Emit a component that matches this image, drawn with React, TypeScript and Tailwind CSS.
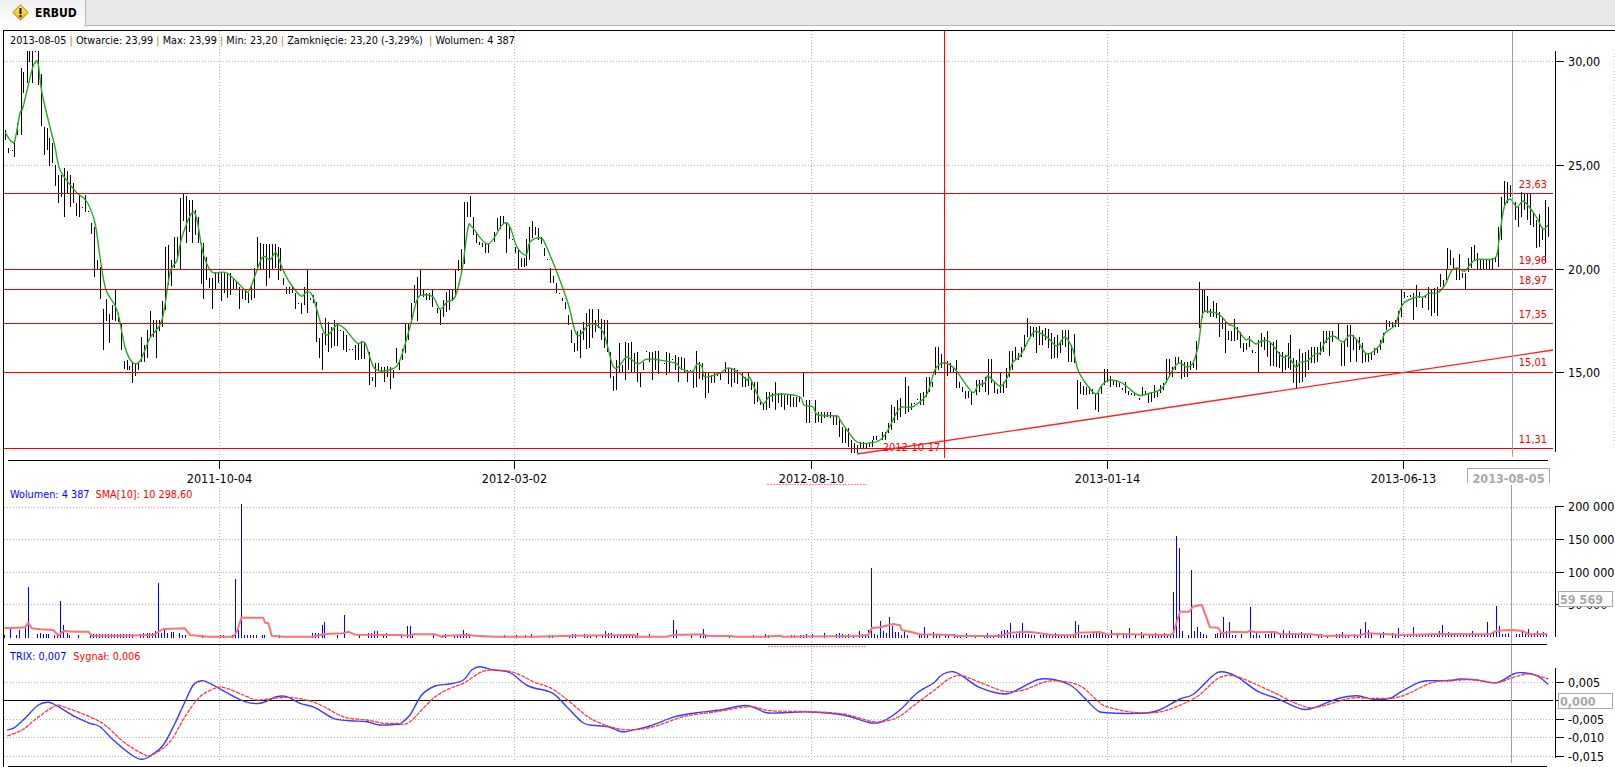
import React from "react";

type R = number[][];
const snap = (ox: number, oy: number, rows: R, from = -1e9, to = 1e9) =>
  rows
    .filter((r) => r[0] >= from && r[0] <= to)
    .map(([X, t, b]) => {
      const x = Math.round(ox + X / 3) + 0.5;
      const y1 = Math.max(51, Math.round(oy + t / 3));
      const y2 = Math.max(y1 + 1, Math.round(oy + b / 3));
      return `M${x} ${y1}V${y2}`;
    })
    .join("");

const smooth = (s: string) => {
  const raw = s.trim().split(/\s+/).map((p) => p.split(",").map(Number));
  const a: number[][] = [];
  for (const p of raw) if (!a.length || p[0] > a[a.length - 1][0]) a.push(p);
  let d = `M${a[0][0]} ${a[0][1]}`;
  for (let i = 0; i < a.length - 1; i++) {
    const p0 = a[Math.max(0, i - 1)], p1 = a[i], p2 = a[i + 1], p3 = a[Math.min(a.length - 1, i + 2)];
    const c1x = p1[0] + (p2[0] - p0[0]) / 6, c1y = p1[1] + (p2[1] - p0[1]) / 6;
    const c2x = p2[0] - (p3[0] - p1[0]) / 6, c2y = p2[1] - (p3[1] - p1[1]) / 6;
    d += `C${c1x.toFixed(1)} ${c1y.toFixed(1)} ${c2x.toFixed(1)} ${c2y.toFixed(1)} ${p2[0]} ${p2[1]}`;
  }
  return d;
};

const c1: R = [[15,390,420],[25,445,458],[35,450,453],[43,425,472],[52,370,405],[62,205,405],[70,215,280],[80,153,250],[88,153,185],[97,153,248],[106,153,156],[115,153,255],[124,222,378],[133,382,465],[142,385,450],[148,415,497],[156,430,490],[165,495,558]];
const c7: R = [[175,15,98],[184,15,80],[193,-6,140],[202,3,70],[211,15,110],[220,40,98],[229,100,138],[238,75,140],[247,110,113],[256,75,125],[265,122,125],[274,158,193],[283,170,320],[292,270,300],[301,290,388],[310,418,540],[319,388,452],[328,433,518],[337,405,450],[346,360,452],[355,428,455],[364,460,540],[373,573,598],[380,571,600],[388,587,600],[397,575,638],[406,580,617],[415,575,600],[424,500,575],[433,525,575],[442,480,565],[451,424,505],[460,450,500],[469,450,563],[478,450,482],[487,393,470],[496,232,420],[505,225,345],[514,270,348],[523,200,295],[532,200,270],[541,85,297],[550,72,152],[559,78,218],[568,90,185],[577,90,218],[586,120,195],[595,140,218],[604,218,342],[610,218,388],[619,262,330],[628,325,355],[637,325,418],[646,305,357],[655,305,340],[664,310,392],[673,310,368],[682,310,383],[691,310,375],[700,325,357],[709,335,360],[718,352,418],[727,360,388],[736,360,390],[745,368,398],[754,342,390],[763,295,385],[772,200,295],[781,220,298],[790,222,298],[799,222,347],[808,222,325],[817,222,300],[826,222,295],[835,230,330],[841,235,302],[850,325,345],[859,352,372],[868,350,372],[877,350,368],[886,370,418],[895,398,402],[904,398,433],[913,352,405],[922,298,428],[931,385,390],[940,375,400],[949,395,515],[958,505,565],[967,490,600],[976,445,525],[985,455,545],[994,470,533],[1003,450,527],[1012,460,527],[1021,480,483],[1030,482,540],[1039,495,545],[1048,538,541],[1057,538,541],[1066,525,570],[1075,520,570],[1084,513,568],[1093,515,568],[1108,545,645],[1117,620,632],[1126,580,650],[1135,580,600],[1144,590,608],[1153,590,635],[1162,587,620],[1171,590,658],[1180,600,625],[1189,535,580],[1198,570,600]];
const c8: R = [[7,508,540],[16,428,520],[25,428,480],[34,370,430],[43,315,370],[52,290,422],[61,270,345],[70,330,350],[79,340,360],[88,340,360],[97,330,380],[112,385,398],[121,390,435],[130,360,412],[139,335,395],[148,330,390],[157,330,362],[166,270,350],[175,240,273],[184,207,270],[193,67,253],[202,65,110],[211,48,110],[220,110,165],[229,155,188],[238,185,195],[247,190,200],[256,190,218],[265,190,218],[283,155,185],[292,115,150],[301,108,148],[310,108,130],[319,130,218],[328,140,178],[337,178,181],[346,200,218],[355,210,268],[364,235,260],[373,235,260],[379,178,258],[388,140,240],[397,123,175],[406,140,165],[415,143,180],[424,172,193],[433,203,228],[442,237,240],[451,265,308],[460,287,310],[469,308,338],[478,338,342],[487,355,362],[496,365,387],[505,405,435],[514,450,490],[523,490,515],[532,452,513],[541,450,533],[550,425,480],[559,400,508],[568,388,505],[577,388,475],[586,420,455],[595,388,445],[604,417,480],[613,420,505],[622,420,515],[629,515,595],[638,588,632],[647,540,630],[656,490,575],[665,555,575],[674,487,600],[683,490,570],[692,487,575],[701,520,575],[710,515,605],[719,575,622],[728,545,570],[737,513,516],[746,515,545],[755,515,600],[764,513,570],[773,513,582],[782,540,543],[791,548,551],[798,517,585],[807,520,580],[816,538,541],[825,525,570],[834,530,607],[843,530,570],[852,535,575],[861,570,607],[870,570,573],[879,570,625],[888,513,622],[897,545,598],[906,548,600],[915,575,655],[924,575,640],[933,585,608],[942,575,608],[951,575,588],[960,575,600],[975,545,580],[984,565,612],[993,565,622],[1002,565,608],[1011,570,612],[1026,580,620],[1035,590,620],[1044,580,618],[1053,600,630],[1062,605,672],[1071,605,665],[1080,665,675],[1090,670,690],[1099,635,690],[1108,635,685],[1117,640,665],[1126,605,690],[1135,640,670],[1144,640,680],[1153,645,690],[1162,645,675],[1171,645,680],[1180,650,680],[1189,650,680],[1198,650,665]];
const c6: R = [[458,100,172],[467,180,250],[476,180,250],[494,180,248],[503,215,245],[512,215,248],[521,215,235],[530,215,230],[539,215,235],[548,225,255],[557,225,255],[566,235,290],[575,260,310],[584,262,310],[593,265,320],[602,300,340],[611,308,340],[620,315,340],[629,305,325],[638,305,325],[647,310,325],[656,310,322],[665,300,322]];
const c9: R = [[220,497,510],[229,497,510],[247,485,510],[256,485,510],[265,460,490],[274,405,480],[283,410,460],[292,390,450],[301,385,440],[316,320,432],[325,348,425],[334,400,420],[343,400,403],[352,388,391],[361,370,405],[370,367,405],[379,320,380],[388,322,365],[397,335,350],[406,232,315],[415,232,300],[424,252,295],[442,273,318],[451,278,310],[460,292,310],[469,270,353],[478,335,355],[487,350,365],[496,362,387],[505,362,385],[514,365,405],[529,330,375],[538,330,365],[547,330,350],[556,320,365],[565,268,375],[574,268,340],[583,335,370],[592,358,372],[601,305,370],[610,335,368],[619,295,355],[628,243,320],[637,243,300],[646,232,270],[655,250,270],[664,232,260],[673,195,240],[682,143,200],[691,168,198],[700,170,200],[709,170,248],[718,168,225],[727,180,225],[736,175,210],[745,178,235],[754,190,268],[763,200,265],[772,195,265],[781,215,250],[787,180,225],[796,180,232],[805,180,275],[814,225,275],[823,192,280],[832,330,417],[841,335,372],[850,348,375],[859,352,375],[868,352,372],[877,358,372],[886,370,420],[895,370,425],[904,345,372],[913,298,345],[922,298,335],[931,318,350],[940,330,345],[949,330,350],[958,340,350],[967,355,360],[976,335,370],[985,363,375],[994,368,375],[1003,370,378],[1018,385,390],[1027,352,375],[1036,362,372],[1045,370,398],[1054,365,395],[1063,345,385],[1072,362,380],[1081,345,370],[1090,340,360],[1099,267,340],[1108,267,320],[1117,290,320],[1126,262,300],[1135,262,280],[1144,270,328],[1153,275,320],[1162,275,320],[1171,272,300],[1180,278,295],[1189,212,300]];
const c10: R = [[148,335,475],[157,360,445],[163,360,425],[172,378,430],[181,418,440],[190,393,440],[199,398,445],[208,425,500],[217,440,478],[226,455,550],[235,483,510],[244,483,512],[253,447,512],[262,470,510],[271,485,535],[280,520,545],[289,520,540],[298,498,530],[307,540,550],[316,545,550],[325,510,605],[334,490,530],[343,500,540],[352,483,562],[361,515,588],[370,515,588],[379,510,590],[388,545,595],[397,545,605],[406,555,600],[415,520,595],[421,495,600],[430,565,640],[439,570,655],[448,538,640],[457,548,635],[466,545,620],[475,540,600],[484,530,580],[493,530,578],[502,530,575],[511,515,555],[520,483,545],[529,483,520],[538,483,558],[547,483,515],[556,497,500],[565,460,510],[574,520,588],[583,510,588],[592,465,530],[601,465,575],[610,495,540],[619,510,575],[628,500,540],[637,520,580],[646,553,575],[655,550,575],[664,545,570],[673,533,555],[682,535,550],[691,510,540],[700,490,520],[709,450,480],[718,453,470],[727,455,472],[736,450,470],[745,423,470],[754,360,440],[761,365,385],[770,378,381],[779,375,381],[788,370,450],[797,345,412],[806,365,385],[815,385,415],[824,375,385],[833,350,420],[842,360,437],[851,355,430],[860,352,437],[869,312,352],[878,330,350],[887,297,330],[892,235,300],[901,240,285],[910,265,300],[919,295,330],[928,252,330],[937,308,325],[946,310,358],[955,265,305],[964,232,295],[973,225,270],[982,250,297],[991,268,297],[1000,268,297],[1009,268,297],[1018,268,297],[1027,265,297],[1036,265,275]];
const c2: R = [[595,680,800],[604,590,720],[613,543,620],[622,547,610],[631,555,590],[646,605,660],[655,620,680],[664,575,650],[673,580,630],[682,580,660],[691,580,675],[700,640,680],[709,660,745],[718,642,742],[727,680,720],[736,600,785],[745,620,710]];

const barsPath =
  snap(0, 0, c1) + snap(0, 170, c7) + snap(400, 180, c8) + snap(650, 340, c6) + snap(800, 270, c9) + snap(1150, 170, c10) + snap(1300, 0, c2);

const sma = "5,132 8,137 12,142 15,140 20,113 23,107 32,70 35,63 38,63 42,93 50,127 55,147 60,170 72,187 77,193 87,202 95,223 100,257 106,290 117,310 125,347 132,362 140,361 150,338 162,320 170,273 177,260 182,237 192,213 197,220 203,253 212,272 227,273 245,290 250,289 262,258 270,260 276,253 283,270 290,283 301,296 307,292 313,297 325,334 337,325 345,329 357,343 365,343 375,369 392,369 400,360 410,327 417,300 423,295 433,297 440,309 447,302 455,297 462,270 468,228 472,227 488,244 503,224 510,227 517,247 526,255 530,242 540,238 547,248 567,300 577,335 590,324 603,332 613,366 620,365 627,357 638,364 648,359 675,363 680,368 692,372 697,364 702,367 705,377 720,373 728,368 738,372 747,380 750,378 762,403 770,396 783,394 800,397 804,405 813,407 818,415 837,416 840,420 847,430 857,442 870,443 880,440 888,430 897,412 902,407 912,407 922,400 928,392 935,370 943,363 954,368 972,392 978,385 985,383 988,376 1000,386 1007,378 1013,362 1020,356 1033,333 1040,333 1048,338 1057,346 1065,337 1073,350 1078,370 1087,385 1096,394 1102,385 1110,380 1122,383 1138,395 1150,393 1162,388 1177,364 1187,367 1193,363 1198,347 1200,333 1203,313 1210,312 1220,315 1228,324 1235,327 1245,339 1249,339 1256,344 1262,341 1270,342 1282,357 1288,356 1296,367 1300,362 1307,361 1315,354 1320,353 1325,342 1333,336 1343,342 1350,335 1357,340 1367,354 1380,345 1385,333 1395,325 1403,304 1417,297 1423,297 1430,293 1437,293 1445,285 1452,270 1458,268 1465,271 1475,260 1495,258 1499,240 1504,208 1510,199 1517,207 1523,201 1530,208 1537,218 1543,229 1548,225";

const volBars = (ox: number, oy: number, baseY: number, tops: R) =>
  tops.map(([X, T]) => `M${Math.round(ox + X / 3) + 0.5} ${Math.round(oy + T / 3)}V${Math.round(oy + baseY / 3)}`).join("");

const vPath =
  volBars(0, 440, 594, [[12,585],[30,562],[48,585],[58,570],[75,560],[85,440],[112,582],[120,578],[130,582],[138,582],[145,582],[163,585],[172,582],[181,483],[190,555],[200,580],[208,585],[235,585],[270,583],[279,583],[288,583],[297,583],[306,583],[315,583],[324,583],[333,583],[342,583],[351,583],[360,583],[369,583],[378,583],[387,583],[396,583],[420,583],[430,580],[440,580],[448,580],[457,578],[466,572],[475,428],[484,578],[493,570],[502,580],[512,576],[520,576],[538,578],[547,585],[556,585],[607,585],[660,585],[670,585],[697,585],[706,416],[715,570],[724,192],[733,585],[742,585],[751,585],[760,585],[769,585],[787,585],[793,585],[838,585],[937,580],[946,580],[955,580],[965,555],[973,546],[1010,585],[1033,525],[1078,585],[1105,580],[1114,580],[1123,573],[1132,573],[1150,583],[1158,580]]) +
  volBars(400, 540, 294, [[4,282],[22,258],[31,258],[37,282],[100,285],[127,285],[136,282],[163,285],[172,285],[181,285],[190,270],[199,279],[208,282],[313,285],[349,285],[376,285],[394,282],[448,285],[457,285],[508,285],[517,282],[526,282],[553,282],[562,285],[571,285],[589,285],[607,285],[616,273],[625,279],[634,279],[643,285],[652,285],[661,285],[670,285],[679,285],[688,285],[697,285],[706,285],[712,279],[748,282],[820,240],[829,270],[874,285],[901,285],[910,267],[916,285],[988,285],[1060,285],[1096,282],[1105,285],[1174,285],[1183,285],[1201,285],[1210,285],[1219,282],[1237,282],[1273,279],[1309,282],[1318,279],[1327,282],[1336,285],[1345,282],[1360,285],[1378,273],[1387,282],[1396,282],[1405,270],[1414,85],[1423,282],[1432,285],[1441,243],[1450,273],[1459,279],[1468,231],[1477,258],[1486,276],[1495,276]]) +
  volBars(900, 510, 384, [[4,376],[13,362],[22,376],[58,373],[64,376],[73,351],[82,376],[100,366],[109,376],[118,376],[136,376],[145,376],[163,372],[172,376],[181,376],[199,369],[226,376],[253,376],[262,369],[271,376],[280,376],[295,372],[304,363],[313,360],[322,360],[331,339],[340,376],[349,372],[358,369],[367,339],[376,372],[385,372],[394,376],[403,376],[421,376],[430,372],[439,372],[448,372],[457,376],[466,369],[475,372],[484,376],[493,376],[502,376],[511,376],[520,372],[526,333],[535,345],[544,376],[553,376],[562,376],[571,372],[580,366],[589,366],[598,366],[607,366],[616,376],[625,376],[634,360],[652,376],[670,369],[679,376],[688,354],[706,372],[724,366],[730,376],[748,372],[757,376],[766,369],[775,376],[784,376],[793,369],[802,372],[811,372],[820,246],[829,78],[838,114],[847,363],[865,375],[874,180],[883,363],[892,351],[901,366],[910,372],[919,375],[946,372],[952,370],[961,368],[970,321],[979,363],[988,336],[997,375],[1006,375],[1024,372],[1051,291],[1060,375],[1069,366],[1078,375],[1096,372],[1105,372],[1114,368],[1123,366],[1141,372],[1150,360],[1159,375],[1168,363],[1177,369],[1186,369],[1195,372],[1204,366],[1213,372],[1222,372],[1231,375],[1255,375],[1264,372],[1282,375],[1309,372],[1318,372],[1327,366],[1336,375],[1345,375],[1363,372],[1372,375],[1381,357],[1396,336],[1405,360],[1414,372],[1441,372],[1450,366],[1477,369],[1486,372],[1495,354]]) +
  volBars(1300, 500, 412, [[313,402],[322,402],[331,402],[340,381],[349,402],[358,402],[367,402],[376,402],[385,402],[394,405],[403,405],[412,402],[418,393],[427,375],[436,402],[445,396],[454,405],[463,405],[472,405],[481,399],[490,402],[499,405],[508,405],[517,393],[526,402],[535,402],[544,402],[553,402],[562,366],[571,402],[580,399],[589,318],[598,378],[607,402],[616,402],[625,399],[634,399],[649,402],[658,402],[667,396],[676,402],[685,387],[694,402],[703,399],[712,393],[721,402],[730,396],[739,402]]);

const pts = (ox: number, oy: number, list: R) => list.map(([X, Y]) => `${(ox + X / 3).toFixed(1)},${(oy + Y / 3).toFixed(1)}`).join(" ");

const volSma = [
  pts(0, 440, [[12,563],[30,565],[75,562],[85,548],[95,565],[120,568],[160,570],[175,587],[190,573],[225,575],[265,575],[275,587],[365,587],[460,585],[490,567],[555,565],[570,585],[625,590],[700,590],[712,572],[724,533],[790,533],[795,548],[805,550],[815,587],[850,590],[935,590],[975,582],[1030,580],[1045,575],[1065,584],[1200,585]]),
  pts(400, 540, [[30,287],[40,283],[105,283],[125,290],[135,287],[205,285],[225,287],[290,290],[400,290],[510,287],[700,285],[715,290],[800,290],[820,285],[905,283],[925,288],[990,288],[1010,290],[1090,290],[1140,287],[1150,290],[1370,288],[1405,285],[1415,264],[1440,262],[1480,252],[1500,256]]),
  pts(900, 510, [[5,360],[30,365],[60,373],[160,375],[170,378],[300,378],[330,368],[385,365],[420,370],[460,376],[520,376],[535,368],[600,366],[625,374],[640,372],[810,375],[820,370],[840,305],[868,305],[878,290],[905,284],[930,352],[955,353],[965,370],[1000,365],[1040,367],[1050,362],[1065,367],[1125,366],[1140,372],[1230,373],[1280,378],[1380,376],[1400,370],[1500,374]]),
  pts(1300, 500, [[300,405],[420,402],[570,403],[590,392],[635,390],[670,393],[685,403],[740,402]]),
].join(" ");

const trixBlue = [
  pts(0, 440, [[22,870],[45,862],[75,835],[115,795],[145,787],[170,797],[225,830],[270,850],[300,860],[340,900],[395,945],[425,958],[455,945],[490,915],[525,850],[555,785],[580,735],[605,722],[630,730],[680,758],[735,785],[780,790],[830,770],[860,770],[900,790],[945,803],[1000,835],[1050,842],[1100,845],[1140,855],[1190,853]]),
  pts(400, 540, [[0,552],[30,525],[65,465],[105,438],[150,432],[190,420],[215,390],[240,380],[280,390],[330,398],[385,438],[455,458],[500,500],[545,545],[570,555],[625,560],[665,575],[700,570],[750,558],[825,530],[890,518],[960,510],[1020,498],[1050,498],[1100,518],[1150,518],[1230,516],[1330,525],[1410,548],[1450,543],[1500,510]]),
  pts(900, 510, [[50,550],[100,520],[125,495],[160,485],[190,500],[240,533],[315,552],[360,535],[410,510],[450,507],[510,525],[550,560],[590,600],[620,608],[710,610],[770,603],[840,567],[880,553],[935,500],[965,485],[1010,500],[1075,545],[1130,565],[1190,592],[1230,597],[1310,567],[1370,557],[1420,568],[1470,565],[1500,547]]),
  pts(1300, 500, [[350,550],[380,542],[450,542],[480,537],[530,540],[590,548],[640,522],[670,518],[710,527],[745,553]]),
].join(" ");

const trixRed = [
  pts(0, 440, [[22,888],[70,868],[110,835],[165,798],[190,800],[300,845],[370,905],[425,940],[455,945],[510,905],[555,830],[600,770],[650,743],[680,745],[730,765],[770,780],[820,775],[880,773],[950,790],[1030,830],[1100,840],[1150,850],[1190,850]]),
  pts(400, 540, [[0,552],[30,545],[100,475],[150,445],[190,430],[240,398],[275,390],[340,397],[400,425],[450,443],[500,478],[550,520],[590,545],[665,568],[750,563],[850,530],[950,515],[1050,500],[1110,512],[1230,515],[1330,522],[1420,545],[1460,542],[1500,528]]),
  pts(900, 510, [[50,580],[110,535],[150,505],[185,497],[240,517],[310,543],[370,540],[450,513],[535,525],[590,570],[620,590],[700,607],[770,607],[830,590],[895,557],[955,505],[1000,497],[1050,515],[1120,547],[1200,585],[1250,592],[1350,565],[1420,565],[1500,560]]),
  pts(1300, 500, [[400,547],[480,540],[530,540],[590,548],[640,532],[690,522],[745,537]]),
].join(" ");

const grids = [219, 514, 811, 1107, 1403];
const dates = ["2011-10-04", "2012-03-02", "2012-08-10", "2013-01-14", "2013-06-13"];

const Dotted = ({ ys, y1, y2 }: { ys: number[]; y1: number; y2: number }) => (
  <g stroke="#b4b4b4" strokeDasharray="1 2" shapeRendering="crispEdges">
    {ys.map((y) => (
      <line key={y} x1={4} x2={1553} y1={y + 0.5} y2={y + 0.5} />
    ))}
    {grids.map((x) => (
      <line key={x} x1={x + 0.5} x2={x + 0.5} y1={y1} y2={y2} />
    ))}
  </g>
);

const Axis = ({ y1, y2, ticks }: { y1: number; y2: number; ticks: [number, string][] }) => (
  <g>
    <g stroke="#000" shapeRendering="crispEdges">
      <line x1={1555.5} x2={1555.5} y1={y1} y2={y2} />
      {ticks.map(([y]) => (
        <line key={y} x1={1555} x2={1564} y1={y + 0.5} y2={y + 0.5} />
      ))}
    </g>
    {ticks.map(([y, t]) => (
      <text key={y} x={1568} y={y + 4.5} fontSize={12.5} fill="#000">
        {t}
      </text>
    ))}
  </g>
);

const redLevels: [number, number, string][] = [
  [193, 188, "23,63"],
  [269, 264, "19,96"],
  [289, 284, "18,97"],
  [323, 318, "17,35"],
  [372, 366, "15,01"],
  [448, 443, "11,31"],
];

const Sep = () => <span className="text-[#c07a20]">|</span>;

export default function App() {
  return (
    <div className="w-[1615px] h-[767px] overflow-hidden flex flex-col bg-white text-black [font-family:'DejaVu_Sans_Condensed','Liberation_Sans',sans-serif]">
      <div className="h-[26px] flex bg-[#e8e8e8] border-b border-[#b6b6b6]">
        <div className="w-[86px] h-[27px] flex items-center gap-[6px] pl-[12px] pb-[2px] bg-gradient-to-b from-[#f0f0f0] to-[#ffffff] border-r border-[#b6b6b6] rounded-br-[4px]">
          <svg width="17" height="17" viewBox="0 0 17 17">
            <defs>
              <linearGradient id="warn" x1="0" y1="0" x2="0" y2="1">
                <stop offset="0" stopColor="#fff48a" />
                <stop offset="1" stopColor="#e6b400" />
              </linearGradient>
            </defs>
            <polygon points="8.5,1 16,8.5 8.5,16 1,8.5" fill="url(#warn)" stroke="#cfa41c" strokeLinejoin="round" strokeWidth="1.2" />
            <rect x="7.4" y="4" width="2.2" height="6" rx="0.6" fill="#222" />
            <rect x="7.4" y="11" width="2.2" height="2.2" rx="0.6" fill="#222" />
          </svg>
          <span className="text-[12px] font-bold leading-none">ERBUD</span>
        </div>
      </div>

      <div className="mt-1 ml-[3px] flex-1 flex flex-col border-t border-l border-black">
        <div className="relative h-[454px]">
          <div className="absolute left-[6px] top-[3px] text-[10.8px] leading-[14px] whitespace-pre">
            2013-08-05 <Sep /> Otwarcie: 23,99 <Sep /> Max: 23,99 <Sep /> Min: 23,20 <Sep /> Zamknięcie: 23,20 (-3,29%)  <Sep /> Wolumen: 4 387
          </div>
          <svg className="block" width="1611" height="454" viewBox="4 31 1611 454">
            <Dotted ys={[61, 165, 269, 372]} y1={31} y2={460} />
            <line x1={1614.5} x2={1614.5} y1={53} y2={448} stroke="#c8c8c8" strokeDasharray="1 2" shapeRendering="crispEdges" />
            <path d={barsPath} stroke="#000" fill="none" shapeRendering="crispEdges" />
            <path d={smooth(sma)} fill="none" stroke="#2aa62a" strokeWidth="1.4" strokeLinejoin="round" />
            <g stroke="#ee0000" shapeRendering="crispEdges">
              {redLevels.map(([y]) => (
                <line key={y} x1={4} x2={1553} y1={y + 0.5} y2={y + 0.5} />
              ))}
            </g>
            <line x1={857} y1={454} x2={1553} y2={350} stroke="#f22" strokeWidth="1.3" />
            <line x1={944.5} x2={944.5} y1={31} y2={458} stroke="#f00" shapeRendering="crispEdges" />
            <line x1={1512.5} x2={1512.5} y1={31} y2={457} stroke="#a0a0a0" shapeRendering="crispEdges" />
            <Axis y1={51} y2={452} ticks={[[61, "30,00"], [165, "25,00"], [269, "20,00"], [372, "15,00"]]} />
            <g fontSize={11} fill="#f00" textAnchor="middle">
              {redLevels.map(([y, ty, t]) => (
                <text key={y} x={1533} y={ty}>
                  {t}
                </text>
              ))}
              <text x={911.5} y={451}>
                2012-10-17
              </text>
            </g>
            <g stroke="#000" shapeRendering="crispEdges">
              <line x1={8} x2={1548} y1={460.5} y2={460.5} />
              {grids.map((x) => (
                <line key={x} x1={x + 0.5} x2={x + 0.5} y1={460} y2={469} />
              ))}
            </g>
            <g fontSize={12.5} fill="#000" textAnchor="middle">
              {grids.map((x, i) => (
                <text key={x} x={x + 0.5} y={482.5}>
                  {dates[i]}
                </text>
              ))}
            </g>
            <line x1={767} x2={867} y1={484.5} y2={484.5} stroke="#ff8a8a" strokeDasharray="2 1" shapeRendering="crispEdges" />
            <rect x={1467.5} y={468.5} width={82} height={20} fill="#fff" stroke="#a8a8a8" shapeRendering="crispEdges" />
            <rect x={1466} y={483} width={86} height={6} fill="#fff" />
            <text x={1508.5} y={482.5} fontSize={12.5} fontWeight={700} fill="#a8a8a8" textAnchor="middle">
              2013-08-05
            </text>
          </svg>
        </div>

        <div className="relative h-[160px]">
          <div className="absolute left-[6px] top-[3px] flex gap-[6px] text-[10.8px] leading-[14px]">
            <span className="text-[#0000ff]">Wolumen: 4 387</span>
            <span className="text-[#f00]">SMA[10]: 10 298,60</span>
          </div>
          <svg className="block" width="1611" height="160" viewBox="4 485 1611 160">
            <Dotted ys={[507, 539, 572, 604]} y1={488} y2={645} />
            <path d={vPath} stroke="#0000ff" fill="none" shapeRendering="crispEdges" />
            <polyline points={volSma} fill="none" stroke="#ff7272" strokeWidth="2" strokeLinejoin="round" />
            <line x1={1511.5} x2={1511.5} y1={485} y2={645} stroke="#a0a0a0" shapeRendering="crispEdges" />
            <Axis y1={506} y2={637} ticks={[[506, "200 000"], [539, "150 000"], [572, "100 000"], [604, "50 000"]]} />
            <rect x={1558.5} y={591.5} width={54} height={15} fill="#fff" stroke="#a8a8a8" shapeRendering="crispEdges" />
            <text x={1560} y={604} fontSize={12.5} fontWeight={700} fill="#a8a8a8">
              59 569
            </text>
            <line x1={8} x2={1547} y1={644.5} y2={644.5} stroke="#000" shapeRendering="crispEdges" />
          </svg>
        </div>

        <div className="relative flex-1">
          <div className="absolute left-[6px] top-[5px] flex gap-[7px] text-[10.8px] leading-[14px]">
            <span className="text-[#0000ff]">TRIX: 0,007</span>
            <span className="text-[#f00]">Sygnał: 0,006</span>
          </div>
          <svg className="block" width="1611" height="122" viewBox="4 645 1611 122">
            <Dotted ys={[682, 719, 737, 756]} y1={645} y2={762} />
            <line x1={768} x2={866} y1={646.5} y2={646.5} stroke="#ff8a8a" strokeDasharray="2 1" shapeRendering="crispEdges" />
            <line x1={4} x2={1553} y1={700.5} y2={700.5} stroke="#000" shapeRendering="crispEdges" />
            <path d={smooth(trixBlue)} fill="none" stroke="#3a3aff" strokeWidth="1.4" />
            <path d={smooth(trixRed)} fill="none" stroke="#ff3a3a" strokeWidth="1.3" strokeDasharray="4 1" />
            <line x1={1511.5} x2={1511.5} y1={645} y2={763} stroke="#a0a0a0" shapeRendering="crispEdges" />
            <Axis y1={668} y2={758} ticks={[[682, "0,005"], [719, "-0,005"], [737, "-0,010"], [756, "-0,015"]]} />
            <line x1={1555} x2={1564} y1={700.5} y2={700.5} stroke="#000" shapeRendering="crispEdges" />
            <rect x={1558.5} y={693.5} width={54} height={15} fill="#fff" stroke="#a8a8a8" shapeRendering="crispEdges" />
            <text x={1560} y={706} fontSize={12.5} fontWeight={700} fill="#a8a8a8">
              0,000
            </text>
            <line x1={8} x2={1547} y1={766.5} y2={766.5} stroke="#000" shapeRendering="crispEdges" />
          </svg>
        </div>
      </div>
    </div>
  );
}
